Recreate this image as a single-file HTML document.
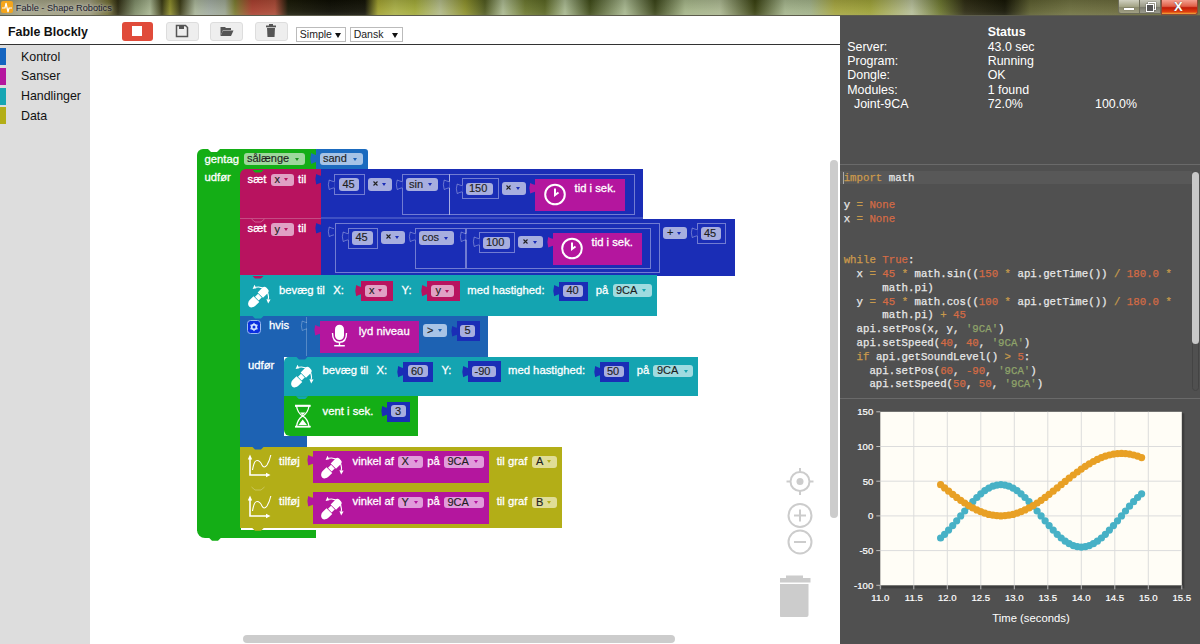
<!DOCTYPE html><html><head><meta charset="utf-8"><style>
html,body{margin:0;padding:0}
body{width:1200px;height:644px;overflow:hidden;position:relative;background:#fff;font-family:"Liberation Sans",sans-serif}
.a{position:absolute}
.tx{white-space:nowrap}
</style></head><body>
<div class="a" style="left:0;top:0;width:1200px;height:16px;background:linear-gradient(90deg,#8e8c6c 0px,#a4a488 20px,#9a9878 90px,#6e6a30 108px,#2e2c12 118px,#7e8c68 135px,#a6b490 150px,#3a3a14 162px,#8c8c2c 170px,#3a3a15 180px,#a8b498 195px,#a0aaa0 210px,#9aa490 225px,#7a7a30 235px,#a84030 252px,#a84a36 275px,#1a1a08 288px,#0e0e04 330px,#141408 365px,#a0a030 378px,#aab048 395px,#a0a838 415px,#b0b888 440px,#8c902c 465px,#505a20 485px,#aab890 503px,#6c7830 525px,#5a6624 545px,#a8b890 565px,#3e4a18 590px,#a8b890 625px,#3a4418 655px,#a4b488 685px,#aab690 720px,#384010 755px,#a4b48c 785px,#a0b088 810px,#a4a440 835px,#9ca038 870px,#b4bc98 912px,#6c7630 940px,#2e2c14 965px,#161606 1005px,#5c5e30 1030px,#6e7040 1070px,#6a6a3c 1118px,#6a6a3c 1200px)"></div>
<div class="a" style="left:0;top:0;width:1200px;height:16px;background:linear-gradient(rgba(0,0,0,0.12),rgba(255,255,255,0.05) 70%,rgba(255,255,255,0.12))"></div>
<div class="a" style="left:0;top:15px;width:1200px;height:1px;background:#5c5c4c"></div>
<div class="a" style="left:1px;top:1px;width:12px;height:12px;background:#f4a51c;border-radius:2px"></div>
<svg class="a" style="left:1px;top:1px" width="12" height="12"><path d="M1 7 H4 L5 2 L7 11 L8 7 H11" stroke="#fff" stroke-width="1.2" fill="none"/></svg>
<div class="a tx" style="left:15.8px;top:2.53px;font-size:9.2px;line-height:11.96px;color:#1a1a2a;font-weight:normal;font-family:'Liberation Sans',sans-serif;text-shadow:0 0 6px #bbb,0 0 3px #ccc">Fable - Shape Robotics</div>
<div class="a" style="left:1118px;top:0;width:22px;height:14px;background:linear-gradient(#d0d0c0,#a4a486 50%,#8a8a6c 52%,#a09f84);border:1px solid #6d6d5a;border-top:none;box-sizing:border-box;border-radius:0 0 0 3px"></div>
<div class="a" style="left:1124px;top:8px;width:10px;height:2px;background:#fff;box-shadow:0 0 1px #333"></div>
<div class="a" style="left:1140px;top:0;width:21px;height:14px;background:linear-gradient(#c6c6b9,#9a9a88 50%,#77776a 52%,#9a9a8c);border:1px solid #6d6d5a;border-top:none;border-left:none;box-sizing:border-box"></div>
<div class="a" style="left:1148px;top:2px;width:6px;height:6px;border:1.5px solid #fff;box-shadow:0 0 1px #333"></div>
<div class="a" style="left:1146px;top:4px;width:6px;height:6px;border:1.5px solid #fff;background:#555;box-shadow:0 0 1px #333"></div>
<div class="a" style="left:1161px;top:0;width:37px;height:15px;background:linear-gradient(#f4a090,#e06048 45%,#c01a08 55%,#e04010 85%,#f0b040);border:1px solid #8a4a3a;border-top:none;box-sizing:border-box;border-radius:0 0 3px 0"></div>
<div class="a tx" style="left:1174px;top:-1px;font-size:13px;font-weight:bold;color:#fff;text-shadow:0 0 1px #333">X</div>
<div class="a" style="left:0;top:16px;width:840px;height:28px;background:#fff"></div>
<div class="a" style="left:0;top:44px;width:840px;height:1px;background:#333"></div>
<div class="a tx" style="left:8px;top:23.64px;font-size:12.4px;line-height:16.12px;color:#111;font-weight:bold;font-family:'Liberation Sans',sans-serif;">Fable Blockly</div>
<div class="a" style="left:122px;top:22px;width:31px;height:19px;background:#e04b3a;border-radius:3px"></div>
<div class="a" style="left:132px;top:26px;width:10px;height:10px;background:#fff"></div>
<div class="a" style="left:166px;top:22px;width:33px;height:19px;background:#eee;border-radius:3px;border:1px solid #ddd;box-sizing:border-box"></div>
<div class="a" style="left:210px;top:22px;width:33px;height:19px;background:#eee;border-radius:3px;border:1px solid #ddd;box-sizing:border-box"></div>
<div class="a" style="left:255px;top:22px;width:33px;height:19px;background:#eee;border-radius:3px;border:1px solid #ddd;box-sizing:border-box"></div>
<svg class="a" style="left:175px;top:24px" width="14" height="14"><path d="M1.5 1.5 H10.5 L12.5 3.5 V12.5 H1.5 Z" fill="none" stroke="#555" stroke-width="1.5"/><rect x="4" y="2" width="5" height="3" fill="#555"/></svg>
<svg class="a" style="left:220px;top:25px" width="14" height="12"><path d="M0.5 2 H5 L6 3 H11 V5 H3 L0.5 11 Z" fill="#555"/><path d="M3 5.5 H13.5 L11 11 H0.5 Z" fill="#555"/></svg>
<svg class="a" style="left:265px;top:24px" width="12" height="14"><rect x="1" y="1.5" width="10" height="1.8" fill="#555"/><rect x="4" y="0" width="4" height="2" fill="#555"/><path d="M2 4 H10 L9.5 13 H2.5 Z" fill="#555"/></svg>
<div class="a" style="left:295.5px;top:27px;width:50.5px;height:15px;border:1px solid #bbb;box-sizing:border-box;background:#fff"></div>
<div class="a tx" style="left:299.8px;top:27.54px;font-size:10.5px;line-height:13.65px;color:#222;font-weight:normal;font-family:'Liberation Sans',sans-serif;">Simple</div>
<div class="a" style="left:335px;top:32.5px;width:0;height:0;border-left:3px solid transparent;border-right:3px solid transparent;border-top:5px solid #111"></div>
<div class="a" style="left:349.5px;top:27px;width:53.5px;height:15px;border:1px solid #bbb;box-sizing:border-box;background:#fff"></div>
<div class="a tx" style="left:353.7px;top:27.54px;font-size:10.5px;line-height:13.65px;color:#222;font-weight:normal;font-family:'Liberation Sans',sans-serif;">Dansk</div>
<div class="a" style="left:391.5px;top:32.5px;width:0;height:0;border-left:3px solid transparent;border-right:3px solid transparent;border-top:5px solid #111"></div>
<div class="a" style="left:0;top:45px;width:90px;height:599px;background:#dddddd"></div>
<div class="a" style="left:0;top:48px;width:6px;height:17px;background:#1565c0"></div>
<div class="a tx" style="left:21px;top:48.94px;font-size:12.4px;line-height:16.12px;color:#111;font-weight:normal;font-family:'Liberation Sans',sans-serif;">Kontrol</div>
<div class="a" style="left:0;top:67.5px;width:6px;height:17px;background:#b5169e"></div>
<div class="a tx" style="left:21px;top:68.44px;font-size:12.4px;line-height:16.12px;color:#111;font-weight:normal;font-family:'Liberation Sans',sans-serif;">Sanser</div>
<div class="a" style="left:0;top:87.5px;width:6px;height:17px;background:#17a6b3"></div>
<div class="a tx" style="left:21px;top:88.44px;font-size:12.4px;line-height:16.12px;color:#111;font-weight:normal;font-family:'Liberation Sans',sans-serif;">Handlinger</div>
<div class="a" style="left:0;top:107px;width:6px;height:17px;background:#b3ae17"></div>
<div class="a tx" style="left:21px;top:107.94px;font-size:12.4px;line-height:16.12px;color:#111;font-weight:normal;font-family:'Liberation Sans',sans-serif;">Data</div>
<div class="a" style="left:830px;top:160px;width:8px;height:358px;background:#ccc;border-radius:4px"></div>
<div class="a" style="left:243px;top:635px;width:432px;height:8px;background:#ccc;border-radius:4px"></div>
<svg class="a" style="left:780px;top:462px" width="42" height="170">
<g stroke="#ccc" stroke-width="2" fill="none">
<circle cx="20" cy="19.5" r="9.5"/>
<line x1="20" y1="6" x2="20" y2="10"/><line x1="20" y1="29" x2="20" y2="33"/>
<line x1="6.5" y1="19.5" x2="10.5" y2="19.5"/><line x1="29.5" y1="19.5" x2="33.5" y2="19.5"/>
<circle cx="20" cy="53.5" r="11.5"/>
<line x1="14" y1="53.5" x2="26" y2="53.5"/><line x1="20" y1="47.5" x2="20" y2="59.5"/>
<circle cx="20" cy="80" r="11.5"/>
<line x1="14" y1="80" x2="26" y2="80"/>
</g>
<circle cx="20" cy="19.5" r="3.5" fill="#ccc"/>
<path d="M-2.5 116 H30.5 V120.5 H-2.5 Z M6 113.5 H23 V116 H6 Z" fill="#ccc"/>
<path d="M-0.5 122 H28.5 V153 Q28.5 155 26.5 155 H1.5 Q-0.5 155 -0.5 153 Z" fill="#ccc"/>
</svg>
<div class="a" style="left:197px;top:149px;width:119px;height:21px;background:#14ae16;border-radius:6px 0 0 0"></div>
<div class="a" style="left:197px;top:169px;width:44px;height:362px;background:#14ae16;"></div>
<div class="a" style="left:197px;top:530px;width:119px;height:8px;background:#14ae16;border-radius:0 0 0 8px"></div>
<div class="a" style="left:208px;top:149px;width:12px;height:3px;background:#fff;clip-path:polygon(0 0,100% 0,75% 100%,25% 100%)"></div>
<div class="a tx" style="left:204.5px;top:151.74px;font-size:11.3px;line-height:14.69px;color:#fff;font-weight:normal;font-family:'Liberation Sans',sans-serif;-webkit-text-stroke:0.3px #fff">gentag</div>
<div class="a" style="left:243.5px;top:153px;width:61.5px;height:12px;background:#9ed89c;border-radius:3px"></div>
<div class="a tx" style="left:247px;top:151.44px;font-size:11px;line-height:14.3px;color:#1e1e1e;font-weight:normal;font-family:'Liberation Sans',sans-serif;-webkit-text-stroke:0.15px #1e1e1e">sålænge</div>
<div class="a" style="left:295.40px;top:157.60px;width:0;height:0;border-left:2.2px solid transparent;border-right:2.2px solid transparent;border-top:3px solid #1c8f1c"></div>
<div class="a tx" style="left:204.5px;top:170.24px;font-size:11.3px;line-height:14.69px;color:#fff;font-weight:normal;font-family:'Liberation Sans',sans-serif;-webkit-text-stroke:0.3px #fff">udfør</div>
<div class="a" style="left:316px;top:149px;width:52px;height:20px;background:#1b6bbf;border-radius:0 3px 0 0"></div>
<div class="a" style="left:320px;top:153px;width:43px;height:12px;background:#a6c3e6;border-radius:3px"></div>
<div class="a tx" style="left:323px;top:151.44px;font-size:11px;line-height:14.3px;color:#1e1e1e;font-weight:normal;font-family:'Liberation Sans',sans-serif;-webkit-text-stroke:0.15px #1e1e1e">sand</div>
<div class="a" style="left:353.40px;top:157.60px;width:0;height:0;border-left:2.2px solid transparent;border-right:2.2px solid transparent;border-top:3px solid #1b5fb5"></div>
<svg class="a" style="left:308.3px;top:152px" width="10" height="14"><g transform="translate(8 1)"><path d="M0.6 1.95 L0 1.95 Q-2 1.46 -4.8 0 Q-6.5 5.50 -4.8 11.00 Q-2 9.54 0 9.05 L0.6 9.05 Z" fill="#1b6bbf"/></g></svg>
<div class="a" style="left:239px;top:168px;width:13px;height:12px;background:#14ae16;"></div>
<div class="a" style="left:240px;top:169.3px;width:81.5px;height:49.19999999999999px;background:#b8135f;border-radius:6px 0 0 0"></div>
<div class="a" style="left:252px;top:169.5px;width:12px;height:3px;background:#14ae16;clip-path:polygon(0 0,100% 0,75% 100%,25% 100%)"></div>
<div class="a tx" style="left:247.5px;top:171.74px;font-size:11.3px;line-height:14.69px;color:#fff;font-weight:normal;font-family:'Liberation Sans',sans-serif;-webkit-text-stroke:0.3px #fff">sæt</div>
<div class="a" style="left:270.5px;top:173.5px;width:23.5px;height:12.5px;background:#e0a0c4;border-radius:3px"></div>
<div class="a tx" style="left:274.5px;top:172.19px;font-size:11px;line-height:14.3px;color:#1e1e1e;font-weight:normal;font-family:'Liberation Sans',sans-serif;-webkit-text-stroke:0.15px #1e1e1e">x</div>
<div class="a" style="left:284.40px;top:178.35px;width:0;height:0;border-left:2.2px solid transparent;border-right:2.2px solid transparent;border-top:3px solid #b8135f"></div>
<div class="a tx" style="left:298px;top:171.74px;font-size:11.3px;line-height:14.69px;color:#fff;font-weight:normal;font-family:'Liberation Sans',sans-serif;-webkit-text-stroke:0.3px #fff">til</div>
<div class="a" style="left:321px;top:169.3px;width:321.5px;height:47.69999999999999px;background:#1a2db6;"></div>
<svg class="a" style="left:313.2px;top:173px" width="10" height="13.5"><g transform="translate(8 1)"><path d="M0.6 1.86 L0 1.86 Q-2 1.39 -4.8 0 Q-6.5 5.25 -4.8 10.50 Q-2 9.11 0 8.64 L0.6 8.64 Z" fill="#1a2db6"/></g></svg>
<div class="a" style="left:334px;top:174px;width:28.50px;height:19.00px;border:1px solid rgba(255,255,255,0.38);box-sizing:content-box;"></div>
<div class="a" style="left:338.8px;top:178px;width:20.19999999999999px;height:12.5px;background:#a7aedf;border-radius:3px"></div>
<div class="a tx" style="left:342.5px;top:176.69px;font-size:11px;line-height:14.3px;color:#1e1e1e;font-weight:normal;font-family:'Liberation Sans',sans-serif;-webkit-text-stroke:0.15px #1e1e1e">45</div>
<div class="a" style="left:368px;top:178px;width:24px;height:12.5px;background:#a7aedf;border-radius:3px"></div>
<div class="a tx" style="left:372.0px;top:176.69px;font-size:11px;line-height:14.3px;color:#1e1e1e;font-weight:normal;font-family:'Liberation Sans',sans-serif;-webkit-text-stroke:0.15px #1e1e1e"></div>
<div class="a" style="left:382.40px;top:182.85px;width:0;height:0;border-left:2.2px solid transparent;border-right:2.2px solid transparent;border-top:3px solid #1a2db6"></div>
<svg class="a" style="left:372.50px;top:181.35px" width="5" height="5"><path d="M0.5 0.5 L4.5 4.5 M4.5 0.5 L0.5 4.5" stroke="#222" stroke-width="1.1"/></svg>
<div class="a" style="left:401.5px;top:174.2px;width:46.50px;height:38.80px;border:1px solid rgba(255,255,255,0.38);box-sizing:content-box;"></div>
<div class="a" style="left:405.6px;top:178px;width:32.19999999999999px;height:12.5px;background:#a7aedf;border-radius:3px"></div>
<div class="a tx" style="left:409px;top:176.69px;font-size:11px;line-height:14.3px;color:#1e1e1e;font-weight:normal;font-family:'Liberation Sans',sans-serif;-webkit-text-stroke:0.15px #1e1e1e">sin</div>
<div class="a" style="left:428.20px;top:182.85px;width:0;height:0;border-left:2.2px solid transparent;border-right:2.2px solid transparent;border-top:3px solid #1a2db6"></div>
<div class="a" style="left:449px;top:174.2px;width:183.70px;height:38.80px;border:1px solid rgba(255,255,255,0.38);box-sizing:content-box;"></div>
<div class="a" style="left:462px;top:178.3px;width:34.70px;height:19.20px;border:1px solid rgba(255,255,255,0.38);box-sizing:content-box;"></div>
<div class="a" style="left:466px;top:182.7px;width:27px;height:12.100000000000023px;background:#a7aedf;border-radius:3px"></div>
<div class="a tx" style="left:469px;top:181.19px;font-size:11px;line-height:14.3px;color:#1e1e1e;font-weight:normal;font-family:'Liberation Sans',sans-serif;-webkit-text-stroke:0.15px #1e1e1e">150</div>
<div class="a" style="left:501.9px;top:182px;width:24.100000000000023px;height:12.5px;background:#a7aedf;border-radius:3px"></div>
<div class="a tx" style="left:506.0px;top:180.69px;font-size:11px;line-height:14.3px;color:#1e1e1e;font-weight:normal;font-family:'Liberation Sans',sans-serif;-webkit-text-stroke:0.15px #1e1e1e"></div>
<div class="a" style="left:516.40px;top:186.85px;width:0;height:0;border-left:2.2px solid transparent;border-right:2.2px solid transparent;border-top:3px solid #1a2db6"></div>
<svg class="a" style="left:506.40px;top:185.35px" width="5" height="5"><path d="M0.5 0.5 L4.5 4.5 M4.5 0.5 L0.5 4.5" stroke="#222" stroke-width="1.1"/></svg>
<div class="a" style="left:535.4px;top:178.6px;width:90.0px;height:32.099999999999994px;background:#b4169e;"></div>
<svg class="a" style="left:527.4px;top:182px" width="10" height="13.5"><g transform="translate(8 1)"><path d="M0.6 1.86 L0 1.86 Q-2 1.39 -4.8 0 Q-6.5 5.25 -4.8 10.50 Q-2 9.11 0 8.64 L0.6 8.64 Z" fill="#b4169e"/></g></svg>
<svg class="a" style="left:543px;top:183px" width="24" height="24"><circle cx="12" cy="11.5" r="9.8" stroke="#fff" stroke-width="2" fill="none"/><path d="M12 5.5 V12 L15.5 9.5" stroke="#fff" stroke-width="2" fill="none"/></svg>
<div class="a tx" style="left:574.5px;top:181.34px;font-size:11.3px;line-height:14.69px;color:#fff;font-weight:normal;font-family:'Liberation Sans',sans-serif;-webkit-text-stroke:0.3px #fff">tid i sek.</div>
<div class="a" style="left:240px;top:218.3px;width:81px;height:1.1999999999999886px;background:#c44c84;"></div>
<div class="a" style="left:321px;top:217.2px;width:321.5px;height:2.3000000000000114px;background:#3f50c3;"></div>
<div class="a" style="left:240px;top:219px;width:81.5px;height:56.60000000000002px;background:#b8135f;"></div>
<svg class="a" style="left:251px;top:218px" width="14" height="5"><path d="M0.5 1 L4 4 H10 L13.5 1" stroke="#cf5c90" stroke-width="1" fill="none"/></svg>
<div class="a tx" style="left:247.5px;top:221.24px;font-size:11.3px;line-height:14.69px;color:#fff;font-weight:normal;font-family:'Liberation Sans',sans-serif;-webkit-text-stroke:0.3px #fff">sæt</div>
<div class="a" style="left:270.5px;top:223px;width:23.5px;height:12.5px;background:#e0a0c4;border-radius:3px"></div>
<div class="a tx" style="left:274.5px;top:221.69px;font-size:11px;line-height:14.3px;color:#1e1e1e;font-weight:normal;font-family:'Liberation Sans',sans-serif;-webkit-text-stroke:0.15px #1e1e1e">y</div>
<div class="a" style="left:284.40px;top:227.85px;width:0;height:0;border-left:2.2px solid transparent;border-right:2.2px solid transparent;border-top:3px solid #b8135f"></div>
<div class="a tx" style="left:298px;top:221.24px;font-size:11.3px;line-height:14.69px;color:#fff;font-weight:normal;font-family:'Liberation Sans',sans-serif;-webkit-text-stroke:0.3px #fff">til</div>
<div class="a" style="left:321px;top:218.7px;width:413.5px;height:56.900000000000034px;background:#1a2db6;"></div>
<svg class="a" style="left:313.2px;top:222px" width="10" height="13.5"><g transform="translate(8 1)"><path d="M0.6 1.86 L0 1.86 Q-2 1.39 -4.8 0 Q-6.5 5.25 -4.8 10.50 Q-2 9.11 0 8.64 L0.6 8.64 Z" fill="#1a2db6"/></g></svg>
<div class="a" style="left:334.5px;top:223px;width:323.00px;height:48.00px;border:1px solid rgba(255,255,255,0.38);box-sizing:content-box;"></div>
<div class="a" style="left:348px;top:227.5px;width:27.50px;height:19.50px;border:1px solid rgba(255,255,255,0.38);box-sizing:content-box;"></div>
<div class="a" style="left:352px;top:231px;width:20.5px;height:14px;background:#a7aedf;border-radius:3px"></div>
<div class="a tx" style="left:355.5px;top:230.44px;font-size:11px;line-height:14.3px;color:#1e1e1e;font-weight:normal;font-family:'Liberation Sans',sans-serif;-webkit-text-stroke:0.15px #1e1e1e">45</div>
<div class="a" style="left:381.25px;top:231px;width:23.75px;height:12.5px;background:#a7aedf;border-radius:3px"></div>
<div class="a tx" style="left:385.0px;top:229.69px;font-size:11px;line-height:14.3px;color:#1e1e1e;font-weight:normal;font-family:'Liberation Sans',sans-serif;-webkit-text-stroke:0.15px #1e1e1e"></div>
<div class="a" style="left:395.40px;top:235.85px;width:0;height:0;border-left:2.2px solid transparent;border-right:2.2px solid transparent;border-top:3px solid #1a2db6"></div>
<svg class="a" style="left:385.75px;top:234.35px" width="5" height="5"><path d="M0.5 0.5 L4.5 4.5 M4.5 0.5 L0.5 4.5" stroke="#222" stroke-width="1.1"/></svg>
<div class="a" style="left:415.3px;top:228px;width:49.20px;height:38.70px;border:1px solid rgba(255,255,255,0.38);box-sizing:content-box;"></div>
<div class="a" style="left:418.75px;top:231px;width:35.0px;height:14px;background:#a7aedf;border-radius:3px"></div>
<div class="a tx" style="left:422px;top:230.44px;font-size:11px;line-height:14.3px;color:#1e1e1e;font-weight:normal;font-family:'Liberation Sans',sans-serif;-webkit-text-stroke:0.15px #1e1e1e">cos</div>
<div class="a" style="left:444.15px;top:236.60px;width:0;height:0;border-left:2.2px solid transparent;border-right:2.2px solid transparent;border-top:3px solid #1a2db6"></div>
<div class="a" style="left:465.5px;top:228px;width:183.50px;height:38.70px;border:1px solid rgba(255,255,255,0.38);box-sizing:content-box;"></div>
<div class="a" style="left:478.75px;top:232px;width:34.25px;height:19.00px;border:1px solid rgba(255,255,255,0.38);box-sizing:content-box;"></div>
<div class="a" style="left:483px;top:237px;width:26.5px;height:12px;background:#a7aedf;border-radius:3px"></div>
<div class="a tx" style="left:486px;top:235.44px;font-size:11px;line-height:14.3px;color:#1e1e1e;font-weight:normal;font-family:'Liberation Sans',sans-serif;-webkit-text-stroke:0.15px #1e1e1e">100</div>
<div class="a" style="left:518px;top:236px;width:24.5px;height:12px;background:#a7aedf;border-radius:3px"></div>
<div class="a tx" style="left:522.0px;top:234.44px;font-size:11px;line-height:14.3px;color:#1e1e1e;font-weight:normal;font-family:'Liberation Sans',sans-serif;-webkit-text-stroke:0.15px #1e1e1e"></div>
<div class="a" style="left:532.90px;top:240.60px;width:0;height:0;border-left:2.2px solid transparent;border-right:2.2px solid transparent;border-top:3px solid #1a2db6"></div>
<svg class="a" style="left:522.50px;top:239.10px" width="5" height="5"><path d="M0.5 0.5 L4.5 4.5 M4.5 0.5 L0.5 4.5" stroke="#222" stroke-width="1.1"/></svg>
<div class="a" style="left:552.5px;top:232.5px;width:89.5px;height:32.0px;background:#b4169e;"></div>
<svg class="a" style="left:544.5px;top:236px" width="10" height="13.5"><g transform="translate(8 1)"><path d="M0.6 1.86 L0 1.86 Q-2 1.39 -4.8 0 Q-6.5 5.25 -4.8 10.50 Q-2 9.11 0 8.64 L0.6 8.64 Z" fill="#b4169e"/></g></svg>
<svg class="a" style="left:560px;top:237px" width="24" height="24"><circle cx="12" cy="11.5" r="9.8" stroke="#fff" stroke-width="2" fill="none"/><path d="M12 5.5 V12 L15.5 9.5" stroke="#fff" stroke-width="2" fill="none"/></svg>
<div class="a tx" style="left:591.5px;top:235.24px;font-size:11.3px;line-height:14.69px;color:#fff;font-weight:normal;font-family:'Liberation Sans',sans-serif;-webkit-text-stroke:0.3px #fff">tid i sek.</div>
<div class="a" style="left:663px;top:227px;width:24px;height:12px;background:#a7aedf;border-radius:3px"></div>
<div class="a tx" style="left:667px;top:225.44px;font-size:11px;line-height:14.3px;color:#1e1e1e;font-weight:normal;font-family:'Liberation Sans',sans-serif;-webkit-text-stroke:0.15px #1e1e1e">+</div>
<div class="a" style="left:677.40px;top:231.60px;width:0;height:0;border-left:2.2px solid transparent;border-right:2.2px solid transparent;border-top:3px solid #1a2db6"></div>
<div class="a" style="left:697px;top:223px;width:27.00px;height:19.00px;border:1px solid rgba(255,255,255,0.38);box-sizing:content-box;"></div>
<svg class="a" style="left:326px;top:178.5px" width="10" height="12.5"><g transform="translate(8 1)"><rect x="-0.5" y="1.68" width="1.2" height="6.14" fill="#1a2db6"/><path d="M0 1.68 Q-2 1.26 -4.8 0 Q-6.5 4.75 -4.8 9.50 Q-2 8.24 0 7.82" fill="none" stroke="rgba(255,255,255,0.38)" stroke-width="0.9"/></g></svg>
<svg class="a" style="left:393.7px;top:178.5px" width="10" height="12.5"><g transform="translate(8 1)"><rect x="-0.5" y="1.68" width="1.2" height="6.14" fill="#1a2db6"/><path d="M0 1.68 Q-2 1.26 -4.8 0 Q-6.5 4.75 -4.8 9.50 Q-2 8.24 0 7.82" fill="none" stroke="rgba(255,255,255,0.38)" stroke-width="0.9"/></g></svg>
<svg class="a" style="left:441.3px;top:178.5px" width="10" height="12.5"><g transform="translate(8 1)"><rect x="-0.5" y="1.68" width="1.2" height="6.14" fill="#1a2db6"/><path d="M0 1.68 Q-2 1.26 -4.8 0 Q-6.5 4.75 -4.8 9.50 Q-2 8.24 0 7.82" fill="none" stroke="rgba(255,255,255,0.38)" stroke-width="0.9"/></g></svg>
<svg class="a" style="left:454px;top:182.5px" width="10" height="12.5"><g transform="translate(8 1)"><rect x="-0.5" y="1.68" width="1.2" height="6.14" fill="#1a2db6"/><path d="M0 1.68 Q-2 1.26 -4.8 0 Q-6.5 4.75 -4.8 9.50 Q-2 8.24 0 7.82" fill="none" stroke="rgba(255,255,255,0.38)" stroke-width="0.9"/></g></svg>
<svg class="a" style="left:326.3px;top:226.3px" width="10" height="12.5"><g transform="translate(8 1)"><rect x="-0.5" y="1.68" width="1.2" height="6.14" fill="#1a2db6"/><path d="M0 1.68 Q-2 1.26 -4.8 0 Q-6.5 4.75 -4.8 9.50 Q-2 8.24 0 7.82" fill="none" stroke="rgba(255,255,255,0.38)" stroke-width="0.9"/></g></svg>
<svg class="a" style="left:340px;top:231px" width="10" height="12.5"><g transform="translate(8 1)"><rect x="-0.5" y="1.68" width="1.2" height="6.14" fill="#1a2db6"/><path d="M0 1.68 Q-2 1.26 -4.8 0 Q-6.5 4.75 -4.8 9.50 Q-2 8.24 0 7.82" fill="none" stroke="rgba(255,255,255,0.38)" stroke-width="0.9"/></g></svg>
<svg class="a" style="left:407.3px;top:231px" width="10" height="12.5"><g transform="translate(8 1)"><rect x="-0.5" y="1.68" width="1.2" height="6.14" fill="#1a2db6"/><path d="M0 1.68 Q-2 1.26 -4.8 0 Q-6.5 4.75 -4.8 9.50 Q-2 8.24 0 7.82" fill="none" stroke="rgba(255,255,255,0.38)" stroke-width="0.9"/></g></svg>
<svg class="a" style="left:457.5px;top:231px" width="10" height="12.5"><g transform="translate(8 1)"><rect x="-0.5" y="1.68" width="1.2" height="6.14" fill="#1a2db6"/><path d="M0 1.68 Q-2 1.26 -4.8 0 Q-6.5 4.75 -4.8 9.50 Q-2 8.24 0 7.82" fill="none" stroke="rgba(255,255,255,0.38)" stroke-width="0.9"/></g></svg>
<svg class="a" style="left:470.75px;top:235.5px" width="10" height="12.5"><g transform="translate(8 1)"><rect x="-0.5" y="1.68" width="1.2" height="6.14" fill="#1a2db6"/><path d="M0 1.68 Q-2 1.26 -4.8 0 Q-6.5 4.75 -4.8 9.50 Q-2 8.24 0 7.82" fill="none" stroke="rgba(255,255,255,0.38)" stroke-width="0.9"/></g></svg>
<svg class="a" style="left:689px;top:226.5px" width="10" height="12.5"><g transform="translate(8 1)"><rect x="-0.5" y="1.68" width="1.2" height="6.14" fill="#1a2db6"/><path d="M0 1.68 Q-2 1.26 -4.8 0 Q-6.5 4.75 -4.8 9.50 Q-2 8.24 0 7.82" fill="none" stroke="rgba(255,255,255,0.38)" stroke-width="0.9"/></g></svg>
<div class="a" style="left:700.75px;top:227px;width:20.25px;height:12.5px;background:#a7aedf;border-radius:3px"></div>
<div class="a tx" style="left:704px;top:225.69px;font-size:11px;line-height:14.3px;color:#1e1e1e;font-weight:normal;font-family:'Liberation Sans',sans-serif;-webkit-text-stroke:0.15px #1e1e1e">45</div>
<div class="a" style="left:240.3px;top:275.3px;width:416.7px;height:40.69999999999999px;background:#14a4b1;"></div>
<div class="a" style="left:252px;top:275.5px;width:12px;height:3px;background:#b8135f;clip-path:polygon(0 0,100% 0,75% 100%,25% 100%)"></div>
<svg class="a" style="left:240.8px;top:279.5px" width="32.0" height="32.0" viewBox="0 0 32 32"><g transform="rotate(-45 17.25 17.25)" fill="#fff"><path d="M14.65 13.2 H9.5 A5.2 4.05 0 0 0 9.5 21.3 H14.65 Z"/><rect x="15.25" y="14.65" width="4.35" height="5.2"/><path d="M20.2 13.45 H26.75 Q29.75 13.45 29.75 16.45 V18.05 Q29.75 21.05 26.75 21.05 H20.2 Z"/></g><path d="M14.96 7.31 A10.2 10.2 0 0 1 27.23 19.37" stroke="#fff" stroke-width="1.1" fill="none"/><path d="M13.5 4.8 L11.6 8.9 L15.4 8.3 Z M25.4 19.3 L29.6 19.6 L27.2 23.4 Z" fill="#fff"/></svg>
<div class="a tx" style="left:279px;top:282.74px;font-size:11.3px;line-height:14.69px;color:#fff;font-weight:normal;font-family:'Liberation Sans',sans-serif;-webkit-text-stroke:0.3px #fff">bevæg til</div>
<div class="a tx" style="left:333.3px;top:282.74px;font-size:11.3px;line-height:14.69px;color:#fff;font-weight:normal;font-family:'Liberation Sans',sans-serif;-webkit-text-stroke:0.3px #fff">X:</div>
<svg class="a" style="left:352.8px;top:284px" width="10" height="14.3"><g transform="translate(8 1)"><path d="M0.6 2.00 L0 2.00 Q-2 1.50 -4.8 0 Q-6.5 5.65 -4.8 11.30 Q-2 9.80 0 9.30 L0.6 9.30 Z" fill="#b8135f"/></g></svg>
<div class="a" style="left:360.8px;top:281.3px;width:32.19999999999999px;height:19.69999999999999px;background:#b8135f;"></div>
<div class="a" style="left:364.7px;top:285px;width:22.80000000000001px;height:11.699999999999989px;background:#e0a0c4;border-radius:3px"></div>
<div class="a tx" style="left:369px;top:283.29px;font-size:11px;line-height:14.3px;color:#1e1e1e;font-weight:normal;font-family:'Liberation Sans',sans-serif;-webkit-text-stroke:0.15px #1e1e1e">x</div>
<div class="a" style="left:377.90px;top:289.45px;width:0;height:0;border-left:2.2px solid transparent;border-right:2.2px solid transparent;border-top:3px solid #b8135f"></div>
<div class="a tx" style="left:401.5px;top:282.74px;font-size:11.3px;line-height:14.69px;color:#fff;font-weight:normal;font-family:'Liberation Sans',sans-serif;-webkit-text-stroke:0.3px #fff">Y:</div>
<svg class="a" style="left:419px;top:284px" width="10" height="14.3"><g transform="translate(8 1)"><path d="M0.6 2.00 L0 2.00 Q-2 1.50 -4.8 0 Q-6.5 5.65 -4.8 11.30 Q-2 9.80 0 9.30 L0.6 9.30 Z" fill="#b8135f"/></g></svg>
<div class="a" style="left:427px;top:281.3px;width:32.5px;height:19.899999999999977px;background:#b8135f;"></div>
<div class="a" style="left:431.2px;top:285px;width:23.30000000000001px;height:12px;background:#e0a0c4;border-radius:3px"></div>
<div class="a tx" style="left:435.5px;top:283.44px;font-size:11px;line-height:14.3px;color:#1e1e1e;font-weight:normal;font-family:'Liberation Sans',sans-serif;-webkit-text-stroke:0.15px #1e1e1e">y</div>
<div class="a" style="left:444.90px;top:289.60px;width:0;height:0;border-left:2.2px solid transparent;border-right:2.2px solid transparent;border-top:3px solid #b8135f"></div>
<div class="a tx" style="left:467.3px;top:282.74px;font-size:11.3px;line-height:14.69px;color:#fff;font-weight:normal;font-family:'Liberation Sans',sans-serif;-webkit-text-stroke:0.3px #fff">med hastighed:</div>
<svg class="a" style="left:551.1px;top:284.4px" width="10" height="14.3"><g transform="translate(8 1)"><path d="M0.6 2.00 L0 2.00 Q-2 1.50 -4.8 0 Q-6.5 5.65 -4.8 11.30 Q-2 9.80 0 9.30 L0.6 9.30 Z" fill="#1a2db6"/></g></svg>
<div class="a" style="left:559px;top:281.5px;width:29px;height:19.80000000000001px;background:#1a2db6;"></div>
<div class="a" style="left:563px;top:285px;width:20.299999999999955px;height:12px;background:#a7aedf;border-radius:3px"></div>
<div class="a tx" style="left:566.5px;top:283.44px;font-size:11px;line-height:14.3px;color:#1e1e1e;font-weight:normal;font-family:'Liberation Sans',sans-serif;-webkit-text-stroke:0.15px #1e1e1e">40</div>
<div class="a tx" style="left:595.8px;top:282.74px;font-size:11.3px;line-height:14.69px;color:#fff;font-weight:normal;font-family:'Liberation Sans',sans-serif;-webkit-text-stroke:0.3px #fff">på</div>
<div class="a" style="left:612.5px;top:284.2px;width:39.5px;height:12.5px;background:#9fdbe0;border-radius:3px"></div>
<div class="a tx" style="left:616px;top:282.89px;font-size:11px;line-height:14.3px;color:#1e1e1e;font-weight:normal;font-family:'Liberation Sans',sans-serif;-webkit-text-stroke:0.15px #1e1e1e">9CA</div>
<div class="a" style="left:642.40px;top:289.05px;width:0;height:0;border-left:2.2px solid transparent;border-right:2.2px solid transparent;border-top:3px solid #17a4b0"></div>
<div class="a" style="left:240.3px;top:315.9px;width:247.7px;height:41.10000000000002px;background:#1d62b3;"></div>
<div class="a" style="left:240.3px;top:356px;width:43.69999999999999px;height:81px;background:#1d62b3;"></div>
<div class="a" style="left:240.3px;top:436px;width:66.30000000000001px;height:10.800000000000011px;background:#1d62b3;"></div>
<div class="a" style="left:252px;top:315.6px;width:12px;height:3px;background:#14a4b1;clip-path:polygon(0 0,100% 0,75% 100%,25% 100%)"></div>
<div class="a" style="left:306.3px;top:317px;width:1px;height:39px;background:rgba(255,255,255,0.25)"></div>
<svg class="a" style="left:247px;top:320px" width="14" height="14"><rect x="0.5" y="0.5" width="13" height="13" rx="3" fill="#0b2fe0" stroke="#9dbcf0" stroke-width="1"/><g fill="#cfe0ff"><circle cx="7" cy="7" r="3.2"/><path d="M7 2.4 L8.2 4.4 H5.8 Z M7 11.6 L8.2 9.6 H5.8 Z M3 4.7 L5.3 4.7 L4.1 6.8 Z M11 4.7 L8.7 4.7 L9.9 6.8 Z M3 9.3 L5.3 9.3 L4.1 7.2 Z M11 9.3 L8.7 9.3 L9.9 7.2 Z"/></g><circle cx="7" cy="7" r="1.5" fill="#0b2fe0"/></svg>
<div class="a tx" style="left:269px;top:318.44px;font-size:11.3px;line-height:14.69px;color:#fff;font-weight:normal;font-family:'Liberation Sans',sans-serif;-webkit-text-stroke:0.3px #fff">hvis</div>
<div class="a tx" style="left:248px;top:357.74px;font-size:11.3px;line-height:14.69px;color:#fff;font-weight:normal;font-family:'Liberation Sans',sans-serif;-webkit-text-stroke:0.3px #fff">udfør</div>
<svg class="a" style="left:298.6px;top:320px" width="10" height="12.5"><g transform="translate(8 1)"><rect x="-0.5" y="1.68" width="1.2" height="6.14" fill="#1d62b3"/><path d="M0 1.68 Q-2 1.26 -4.8 0 Q-6.5 4.75 -4.8 9.50 Q-2 8.24 0 7.82" fill="none" stroke="rgba(255,255,255,0.3)" stroke-width="0.9"/></g></svg>
<svg class="a" style="left:311.7px;top:324px" width="10" height="13.5"><g transform="translate(8 1)"><path d="M0.6 1.86 L0 1.86 Q-2 1.39 -4.8 0 Q-6.5 5.25 -4.8 10.50 Q-2 9.11 0 8.64 L0.6 8.64 Z" fill="#b4169e"/></g></svg>
<div class="a" style="left:319.7px;top:320.9px;width:99.60000000000002px;height:31.900000000000034px;background:#b4169e;"></div>
<svg class="a" style="left:325px;top:320px" width="30" height="32"><rect x="10" y="4.7" width="9" height="15.3" rx="4.5" fill="#fff"/><path d="M7.5 13 Q7.5 22.3 14.5 22.3 Q21.5 22.3 21.5 13" stroke="#fff" stroke-width="1.4" fill="none"/><path d="M14.5 22 V25.5 M9.2 25.8 H19.8" stroke="#fff" stroke-width="1.4" fill="none"/></svg>
<div class="a tx" style="left:358.8px;top:323.74px;font-size:11.3px;line-height:14.69px;color:#fff;font-weight:normal;font-family:'Liberation Sans',sans-serif;-webkit-text-stroke:0.3px #fff">lyd niveau</div>
<div class="a" style="left:423px;top:324px;width:24.30000000000001px;height:12.5px;background:#a8c4e6;border-radius:3px"></div>
<div class="a tx" style="left:427px;top:322.69px;font-size:11px;line-height:14.3px;color:#1e1e1e;font-weight:normal;font-family:'Liberation Sans',sans-serif;-webkit-text-stroke:0.15px #1e1e1e">&gt;</div>
<div class="a" style="left:437.70px;top:328.85px;width:0;height:0;border-left:2.2px solid transparent;border-right:2.2px solid transparent;border-top:3px solid #1d62b3"></div>
<svg class="a" style="left:448.7px;top:324.5px" width="10" height="13.5"><g transform="translate(8 1)"><path d="M0.6 1.86 L0 1.86 Q-2 1.39 -4.8 0 Q-6.5 5.25 -4.8 10.50 Q-2 9.11 0 8.64 L0.6 8.64 Z" fill="#1a2db6"/></g></svg>
<div class="a" style="left:456.7px;top:321.3px;width:23.30000000000001px;height:20.19999999999999px;background:#1a2db6;"></div>
<div class="a" style="left:460px;top:324.8px;width:15px;height:12.399999999999977px;background:#a7aedf;border-radius:3px"></div>
<div class="a tx" style="left:464.5px;top:323.44px;font-size:11px;line-height:14.3px;color:#1e1e1e;font-weight:normal;font-family:'Liberation Sans',sans-serif;-webkit-text-stroke:0.15px #1e1e1e">5</div>
<div class="a" style="left:283.8px;top:356.7px;width:414.2px;height:39.80000000000001px;background:#14a4b1;border-radius:5px 0 0 0"></div>
<div class="a" style="left:296px;top:356.5px;width:12px;height:3px;background:#1d62b3;clip-path:polygon(0 0,100% 0,75% 100%,25% 100%)"></div>
<svg class="a" style="left:284px;top:360px" width="32.0" height="32.0" viewBox="0 0 32 32"><g transform="rotate(-45 17.25 17.25)" fill="#fff"><path d="M14.65 13.2 H9.5 A5.2 4.05 0 0 0 9.5 21.3 H14.65 Z"/><rect x="15.25" y="14.65" width="4.35" height="5.2"/><path d="M20.2 13.45 H26.75 Q29.75 13.45 29.75 16.45 V18.05 Q29.75 21.05 26.75 21.05 H20.2 Z"/></g><path d="M14.96 7.31 A10.2 10.2 0 0 1 27.23 19.37" stroke="#fff" stroke-width="1.1" fill="none"/><path d="M13.5 4.8 L11.6 8.9 L15.4 8.3 Z M25.4 19.3 L29.6 19.6 L27.2 23.4 Z" fill="#fff"/></svg>
<div class="a tx" style="left:322.5px;top:363.24px;font-size:11.3px;line-height:14.69px;color:#fff;font-weight:normal;font-family:'Liberation Sans',sans-serif;-webkit-text-stroke:0.3px #fff">bevæg til</div>
<div class="a tx" style="left:376.5px;top:363.24px;font-size:11.3px;line-height:14.69px;color:#fff;font-weight:normal;font-family:'Liberation Sans',sans-serif;-webkit-text-stroke:0.3px #fff">X:</div>
<svg class="a" style="left:395.4px;top:364.5px" width="10" height="14.3"><g transform="translate(8 1)"><path d="M0.6 2.00 L0 2.00 Q-2 1.50 -4.8 0 Q-6.5 5.65 -4.8 11.30 Q-2 9.80 0 9.30 L0.6 9.30 Z" fill="#1a2db6"/></g></svg>
<div class="a" style="left:403.4px;top:361.7px;width:29.30000000000001px;height:20.0px;background:#1a2db6;"></div>
<div class="a" style="left:407.7px;top:365.4px;width:20.69999999999999px;height:11.600000000000023px;background:#a7aedf;border-radius:3px"></div>
<div class="a tx" style="left:411px;top:363.64px;font-size:11px;line-height:14.3px;color:#1e1e1e;font-weight:normal;font-family:'Liberation Sans',sans-serif;-webkit-text-stroke:0.15px #1e1e1e">60</div>
<div class="a tx" style="left:441.4px;top:363.24px;font-size:11.3px;line-height:14.69px;color:#fff;font-weight:normal;font-family:'Liberation Sans',sans-serif;-webkit-text-stroke:0.3px #fff">Y:</div>
<svg class="a" style="left:459.5px;top:364.5px" width="10" height="14.3"><g transform="translate(8 1)"><path d="M0.6 2.00 L0 2.00 Q-2 1.50 -4.8 0 Q-6.5 5.65 -4.8 11.30 Q-2 9.80 0 9.30 L0.6 9.30 Z" fill="#1a2db6"/></g></svg>
<div class="a" style="left:467.5px;top:361.3px;width:33.10000000000002px;height:20.69999999999999px;background:#1a2db6;"></div>
<div class="a" style="left:471.5px;top:365.5px;width:24.30000000000001px;height:11.800000000000011px;background:#a7aedf;border-radius:3px"></div>
<div class="a tx" style="left:474.5px;top:363.84px;font-size:11px;line-height:14.3px;color:#1e1e1e;font-weight:normal;font-family:'Liberation Sans',sans-serif;-webkit-text-stroke:0.15px #1e1e1e">-90</div>
<div class="a tx" style="left:508px;top:363.24px;font-size:11.3px;line-height:14.69px;color:#fff;font-weight:normal;font-family:'Liberation Sans',sans-serif;-webkit-text-stroke:0.3px #fff">med hastighed:</div>
<svg class="a" style="left:591.6px;top:364.5px" width="10" height="14.3"><g transform="translate(8 1)"><path d="M0.6 2.00 L0 2.00 Q-2 1.50 -4.8 0 Q-6.5 5.65 -4.8 11.30 Q-2 9.80 0 9.30 L0.6 9.30 Z" fill="#1a2db6"/></g></svg>
<div class="a" style="left:599.6px;top:361.5px;width:29.199999999999932px;height:20.5px;background:#1a2db6;"></div>
<div class="a" style="left:603.6px;top:365.5px;width:20.899999999999977px;height:11.800000000000011px;background:#a7aedf;border-radius:3px"></div>
<div class="a tx" style="left:607px;top:363.84px;font-size:11px;line-height:14.3px;color:#1e1e1e;font-weight:normal;font-family:'Liberation Sans',sans-serif;-webkit-text-stroke:0.15px #1e1e1e">50</div>
<div class="a tx" style="left:636.7px;top:363.24px;font-size:11.3px;line-height:14.69px;color:#fff;font-weight:normal;font-family:'Liberation Sans',sans-serif;-webkit-text-stroke:0.3px #fff">på</div>
<div class="a" style="left:653.3px;top:364.8px;width:40.0px;height:12.5px;background:#9fdbe0;border-radius:3px"></div>
<div class="a tx" style="left:657px;top:363.49px;font-size:11px;line-height:14.3px;color:#1e1e1e;font-weight:normal;font-family:'Liberation Sans',sans-serif;-webkit-text-stroke:0.15px #1e1e1e">9CA</div>
<div class="a" style="left:683.70px;top:369.65px;width:0;height:0;border-left:2.2px solid transparent;border-right:2.2px solid transparent;border-top:3px solid #17a4b0"></div>
<div class="a" style="left:283.8px;top:396.2px;width:134.39999999999998px;height:40.30000000000001px;background:#14ae16;border-radius:0 0 0 6px"></div>
<div class="a" style="left:296px;top:396.3px;width:12px;height:3px;background:#14a4b1;clip-path:polygon(0 0,100% 0,75% 100%,25% 100%)"></div>
<svg class="a" style="left:288px;top:400px" width="30" height="32"><g stroke="#fff" stroke-width="1.3" fill="none"><path d="M7 5.8 H22.5 M7 26.7 H22.5"/><path d="M8.5 6 Q9.5 13 14.7 16 Q20 13 21 6"/><path d="M8.5 26.5 Q9.5 19 14.7 16 Q20 19 21 26.5"/></g><path d="M7 4.8 H22.5 V6.8 H7 Z M7 25.8 H22.5 V27.6 H7 Z" fill="#fff"/><path d="M12 12.5 H17.5 L14.7 15 Z M10.5 25 L14.7 19.5 L19 25 Z" fill="#fff"/></svg>
<div class="a tx" style="left:322.5px;top:403.54px;font-size:11.3px;line-height:14.69px;color:#fff;font-weight:normal;font-family:'Liberation Sans',sans-serif;-webkit-text-stroke:0.3px #fff">vent i sek.</div>
<svg class="a" style="left:379px;top:404.5px" width="10" height="13.5"><g transform="translate(8 1)"><path d="M0.6 1.86 L0 1.86 Q-2 1.39 -4.8 0 Q-6.5 5.25 -4.8 10.50 Q-2 9.11 0 8.64 L0.6 8.64 Z" fill="#1a2db6"/></g></svg>
<div class="a" style="left:387px;top:401.7px;width:23px;height:20.30000000000001px;background:#1a2db6;"></div>
<div class="a" style="left:391px;top:405.2px;width:15px;height:12.300000000000011px;background:#a7aedf;border-radius:3px"></div>
<div class="a tx" style="left:395px;top:403.79px;font-size:11px;line-height:14.3px;color:#1e1e1e;font-weight:normal;font-family:'Liberation Sans',sans-serif;-webkit-text-stroke:0.15px #1e1e1e">3</div>
<div class="a" style="left:240.3px;top:446.8px;width:321.40000000000003px;height:40.5px;background:#b3ae17;"></div>
<svg class="a" style="left:244px;top:448.3px" width="32" height="32"><g stroke="#fff" stroke-width="1.6" fill="none"><path d="M6 9 V27 H24"/><path d="M8.5 22 Q10 12.5 13 12.5 Q16 12.5 18 17 Q20 21 23 17 Q25.5 13 26.8 7" stroke-width="1.1"/></g><path d="M3.8 11.5 L6 6.5 L8.2 11.5 Z M22 24.8 L26.5 27 L22 29.2 Z" fill="#fff"/></svg>
<div class="a tx" style="left:279px;top:453.54px;font-size:11.3px;line-height:14.69px;color:#fff;font-weight:normal;font-family:'Liberation Sans',sans-serif;-webkit-text-stroke:0.3px #fff">tilføj</div>
<svg class="a" style="left:305px;top:454.3px" width="10" height="13.5"><g transform="translate(8 1)"><path d="M0.6 1.86 L0 1.86 Q-2 1.39 -4.8 0 Q-6.5 5.25 -4.8 10.50 Q-2 9.11 0 8.64 L0.6 8.64 Z" fill="#b4169e"/></g></svg>
<div class="a" style="left:313px;top:451.40000000000003px;width:176px;height:31.69999999999999px;background:#b4169e;"></div>
<svg class="a" style="left:314px;top:451.1px" width="32.0" height="32.0" viewBox="0 0 32 32"><g transform="rotate(-45 17.25 17.25)" fill="#fff"><path d="M14.65 13.2 H9.5 A5.2 4.05 0 0 0 9.5 21.3 H14.65 Z"/><rect x="15.25" y="14.65" width="4.35" height="5.2"/><path d="M20.2 13.45 H26.75 Q29.75 13.45 29.75 16.45 V18.05 Q29.75 21.05 26.75 21.05 H20.2 Z"/></g><path d="M14.96 7.31 A10.2 10.2 0 0 1 27.23 19.37" stroke="#fff" stroke-width="1.1" fill="none"/><path d="M13.5 4.8 L11.6 8.9 L15.4 8.3 Z M25.4 19.3 L29.6 19.6 L27.2 23.4 Z" fill="#fff"/></svg>
<div class="a tx" style="left:352.5px;top:453.54px;font-size:11.3px;line-height:14.69px;color:#fff;font-weight:normal;font-family:'Liberation Sans',sans-serif;-webkit-text-stroke:0.3px #fff">vinkel af</div>
<div class="a" style="left:398.3px;top:456.0px;width:25.0px;height:11.699999999999989px;background:#e19cdb;border-radius:3px"></div>
<div class="a tx" style="left:401.5px;top:454.29px;font-size:11px;line-height:14.3px;color:#1e1e1e;font-weight:normal;font-family:'Liberation Sans',sans-serif;-webkit-text-stroke:0.15px #1e1e1e">X</div>
<div class="a" style="left:413.70px;top:460.45px;width:0;height:0;border-left:2.2px solid transparent;border-right:2.2px solid transparent;border-top:3px solid #b4169e"></div>
<div class="a tx" style="left:427.3px;top:453.54px;font-size:11.3px;line-height:14.69px;color:#fff;font-weight:normal;font-family:'Liberation Sans',sans-serif;-webkit-text-stroke:0.3px #fff">på</div>
<div class="a" style="left:444px;top:456.0px;width:40px;height:11.699999999999989px;background:#e19cdb;border-radius:3px"></div>
<div class="a tx" style="left:447.5px;top:454.29px;font-size:11px;line-height:14.3px;color:#1e1e1e;font-weight:normal;font-family:'Liberation Sans',sans-serif;-webkit-text-stroke:0.15px #1e1e1e">9CA</div>
<div class="a" style="left:474.40px;top:460.45px;width:0;height:0;border-left:2.2px solid transparent;border-right:2.2px solid transparent;border-top:3px solid #b4169e"></div>
<div class="a tx" style="left:496.7px;top:453.54px;font-size:11.3px;line-height:14.69px;color:#fff;font-weight:normal;font-family:'Liberation Sans',sans-serif;-webkit-text-stroke:0.3px #fff">til graf</div>
<div class="a" style="left:532.3px;top:456.0px;width:24.40000000000009px;height:11.699999999999989px;background:#e0dd97;border-radius:3px"></div>
<div class="a tx" style="left:536px;top:454.29px;font-size:11px;line-height:14.3px;color:#1e1e1e;font-weight:normal;font-family:'Liberation Sans',sans-serif;-webkit-text-stroke:0.15px #1e1e1e">A</div>
<div class="a" style="left:547.10px;top:460.45px;width:0;height:0;border-left:2.2px solid transparent;border-right:2.2px solid transparent;border-top:3px solid #b3ae17"></div>
<div class="a" style="left:240.3px;top:486.5px;width:321.40000000000003px;height:1.1999999999999886px;background:#c6c24a;"></div>
<div class="a" style="left:240.3px;top:487.3px;width:321.40000000000003px;height:40.49999999999994px;background:#b3ae17;"></div>
<svg class="a" style="left:244px;top:488.8px" width="32" height="32"><g stroke="#fff" stroke-width="1.6" fill="none"><path d="M6 9 V27 H24"/><path d="M8.5 22 Q10 12.5 13 12.5 Q16 12.5 18 17 Q20 21 23 17 Q25.5 13 26.8 7" stroke-width="1.1"/></g><path d="M3.8 11.5 L6 6.5 L8.2 11.5 Z M22 24.8 L26.5 27 L22 29.2 Z" fill="#fff"/></svg>
<div class="a tx" style="left:279px;top:494.04px;font-size:11.3px;line-height:14.69px;color:#fff;font-weight:normal;font-family:'Liberation Sans',sans-serif;-webkit-text-stroke:0.3px #fff">tilføj</div>
<svg class="a" style="left:305px;top:494.8px" width="10" height="13.5"><g transform="translate(8 1)"><path d="M0.6 1.86 L0 1.86 Q-2 1.39 -4.8 0 Q-6.5 5.25 -4.8 10.50 Q-2 9.11 0 8.64 L0.6 8.64 Z" fill="#b4169e"/></g></svg>
<div class="a" style="left:313px;top:491.90000000000003px;width:176px;height:31.69999999999999px;background:#b4169e;"></div>
<svg class="a" style="left:314px;top:491.6px" width="32.0" height="32.0" viewBox="0 0 32 32"><g transform="rotate(-45 17.25 17.25)" fill="#fff"><path d="M14.65 13.2 H9.5 A5.2 4.05 0 0 0 9.5 21.3 H14.65 Z"/><rect x="15.25" y="14.65" width="4.35" height="5.2"/><path d="M20.2 13.45 H26.75 Q29.75 13.45 29.75 16.45 V18.05 Q29.75 21.05 26.75 21.05 H20.2 Z"/></g><path d="M14.96 7.31 A10.2 10.2 0 0 1 27.23 19.37" stroke="#fff" stroke-width="1.1" fill="none"/><path d="M13.5 4.8 L11.6 8.9 L15.4 8.3 Z M25.4 19.3 L29.6 19.6 L27.2 23.4 Z" fill="#fff"/></svg>
<div class="a tx" style="left:352.5px;top:494.04px;font-size:11.3px;line-height:14.69px;color:#fff;font-weight:normal;font-family:'Liberation Sans',sans-serif;-webkit-text-stroke:0.3px #fff">vinkel af</div>
<div class="a" style="left:398.3px;top:496.5px;width:25.0px;height:11.699999999999989px;background:#e19cdb;border-radius:3px"></div>
<div class="a tx" style="left:401.5px;top:494.79px;font-size:11px;line-height:14.3px;color:#1e1e1e;font-weight:normal;font-family:'Liberation Sans',sans-serif;-webkit-text-stroke:0.15px #1e1e1e">Y</div>
<div class="a" style="left:413.70px;top:500.95px;width:0;height:0;border-left:2.2px solid transparent;border-right:2.2px solid transparent;border-top:3px solid #b4169e"></div>
<div class="a tx" style="left:427.3px;top:494.04px;font-size:11.3px;line-height:14.69px;color:#fff;font-weight:normal;font-family:'Liberation Sans',sans-serif;-webkit-text-stroke:0.3px #fff">på</div>
<div class="a" style="left:444px;top:496.5px;width:40px;height:11.699999999999989px;background:#e19cdb;border-radius:3px"></div>
<div class="a tx" style="left:447.5px;top:494.79px;font-size:11px;line-height:14.3px;color:#1e1e1e;font-weight:normal;font-family:'Liberation Sans',sans-serif;-webkit-text-stroke:0.15px #1e1e1e">9CA</div>
<div class="a" style="left:474.40px;top:500.95px;width:0;height:0;border-left:2.2px solid transparent;border-right:2.2px solid transparent;border-top:3px solid #b4169e"></div>
<div class="a tx" style="left:496.7px;top:494.04px;font-size:11.3px;line-height:14.69px;color:#fff;font-weight:normal;font-family:'Liberation Sans',sans-serif;-webkit-text-stroke:0.3px #fff">til graf</div>
<div class="a" style="left:532.3px;top:496.5px;width:24.40000000000009px;height:11.699999999999989px;background:#e0dd97;border-radius:3px"></div>
<div class="a tx" style="left:536px;top:494.79px;font-size:11px;line-height:14.3px;color:#1e1e1e;font-weight:normal;font-family:'Liberation Sans',sans-serif;-webkit-text-stroke:0.15px #1e1e1e">B</div>
<div class="a" style="left:547.10px;top:500.95px;width:0;height:0;border-left:2.2px solid transparent;border-right:2.2px solid transparent;border-top:3px solid #b3ae17"></div>
<div class="a" style="left:252px;top:446.5px;width:12px;height:3px;background:#1d62b3;clip-path:polygon(0 0,100% 0,75% 100%,25% 100%)"></div>
<svg class="a" style="left:251px;top:486px" width="14" height="5"><path d="M0.5 1 L4 4 H10 L13.5 1" stroke="#c9c55a" stroke-width="1" fill="none"/></svg>
<div class="a" style="left:252px;top:527.8px;width:12px;height:3px;background:#b3ae17;clip-path:polygon(0 0,100% 0,75% 100%,25% 100%)"></div>
<div class="a" style="left:209px;top:537.7px;width:12px;height:3px;background:#14ae16;clip-path:polygon(0 0,100% 0,75% 100%,25% 100%)"></div>
<div class="a" style="left:840px;top:16px;width:360px;height:628px;background:#505050"></div>
<div class="a tx" style="left:987.7px;top:23.64px;font-size:12.4px;line-height:16.12px;color:#fff;font-weight:bold;font-family:'Liberation Sans',sans-serif;">Status</div>
<div class="a tx" style="left:847.3px;top:38.64px;font-size:12.4px;line-height:16.12px;color:#fff;font-weight:normal;font-family:'Liberation Sans',sans-serif;">Server:</div>
<div class="a tx" style="left:987.7px;top:38.64px;font-size:12.4px;line-height:16.12px;color:#fff;font-weight:normal;font-family:'Liberation Sans',sans-serif;">43.0 sec</div>
<div class="a tx" style="left:847.3px;top:52.94px;font-size:12.4px;line-height:16.12px;color:#fff;font-weight:normal;font-family:'Liberation Sans',sans-serif;">Program:</div>
<div class="a tx" style="left:987.7px;top:52.94px;font-size:12.4px;line-height:16.12px;color:#fff;font-weight:normal;font-family:'Liberation Sans',sans-serif;">Running</div>
<div class="a tx" style="left:847.3px;top:67.44px;font-size:12.4px;line-height:16.12px;color:#fff;font-weight:normal;font-family:'Liberation Sans',sans-serif;">Dongle:</div>
<div class="a tx" style="left:987.7px;top:67.44px;font-size:12.4px;line-height:16.12px;color:#fff;font-weight:normal;font-family:'Liberation Sans',sans-serif;">OK</div>
<div class="a tx" style="left:847.3px;top:81.64px;font-size:12.4px;line-height:16.12px;color:#fff;font-weight:normal;font-family:'Liberation Sans',sans-serif;">Modules:</div>
<div class="a tx" style="left:987.7px;top:81.64px;font-size:12.4px;line-height:16.12px;color:#fff;font-weight:normal;font-family:'Liberation Sans',sans-serif;">1 found</div>
<div class="a tx" style="left:854px;top:96.14px;font-size:12.4px;line-height:16.12px;color:#fff;font-weight:normal;font-family:'Liberation Sans',sans-serif;">Joint-9CA</div>
<div class="a tx" style="left:987.7px;top:96.14px;font-size:12.4px;line-height:16.12px;color:#fff;font-weight:normal;font-family:'Liberation Sans',sans-serif;">72.0%</div>
<div class="a tx" style="left:1095px;top:96.14px;font-size:12.4px;line-height:16.12px;color:#fff;font-weight:normal;font-family:'Liberation Sans',sans-serif;">100.0%</div>
<div class="a" style="left:840px;top:164px;width:360px;height:1px;background:#6a6a6a"></div>
<div class="a" style="left:840px;top:171px;width:352px;height:13px;background:#585858"></div>
<div class="a" style="left:843px;top:172px;width:1px;height:12px;background:#aaa"></div>
<div class="a" style="left:840px;top:165px;width:352px;height:232px;overflow:hidden">
<div class="a tx" style="left:3.7px;top:6.67px;font-family:'Liberation Mono',monospace;font-size:10.72px;line-height:13.78px;color:#e8e8e8;white-space:pre;-webkit-text-stroke-width:0.25px"><span style="color:#cc9a4c">import</span> <span style="color:#e8e8e8">math</span></div>
<div class="a tx" style="left:3.7px;top:20.45px;font-family:'Liberation Mono',monospace;font-size:10.72px;line-height:13.78px;color:#e8e8e8;white-space:pre;-webkit-text-stroke-width:0.25px"></div>
<div class="a tx" style="left:3.7px;top:34.23px;font-family:'Liberation Mono',monospace;font-size:10.72px;line-height:13.78px;color:#e8e8e8;white-space:pre;-webkit-text-stroke-width:0.25px"><span style="color:#e8e8e8">y</span> <span style="color:#c69a4c">=</span> <span style="color:#d36b45">None</span></div>
<div class="a tx" style="left:3.7px;top:48.01px;font-family:'Liberation Mono',monospace;font-size:10.72px;line-height:13.78px;color:#e8e8e8;white-space:pre;-webkit-text-stroke-width:0.25px"><span style="color:#e8e8e8">x</span> <span style="color:#c69a4c">=</span> <span style="color:#d36b45">None</span></div>
<div class="a tx" style="left:3.7px;top:61.79px;font-family:'Liberation Mono',monospace;font-size:10.72px;line-height:13.78px;color:#e8e8e8;white-space:pre;-webkit-text-stroke-width:0.25px"></div>
<div class="a tx" style="left:3.7px;top:75.57px;font-family:'Liberation Mono',monospace;font-size:10.72px;line-height:13.78px;color:#e8e8e8;white-space:pre;-webkit-text-stroke-width:0.25px"></div>
<div class="a tx" style="left:3.7px;top:89.35px;font-family:'Liberation Mono',monospace;font-size:10.72px;line-height:13.78px;color:#e8e8e8;white-space:pre;-webkit-text-stroke-width:0.25px"><span style="color:#cc9a4c">while</span> <span style="color:#d36b45">True</span><span style="color:#e8e8e8">:</span></div>
<div class="a tx" style="left:3.7px;top:103.13px;font-family:'Liberation Mono',monospace;font-size:10.72px;line-height:13.78px;color:#e8e8e8;white-space:pre;-webkit-text-stroke-width:0.25px">  <span style="color:#e8e8e8">x</span> <span style="color:#c69a4c">=</span> <span style="color:#d36b45">45</span> <span style="color:#c69a4c">*</span> <span style="color:#e8e8e8">math.sin((</span><span style="color:#d36b45">150</span> <span style="color:#c69a4c">*</span> <span style="color:#e8e8e8">api.getTime())</span> <span style="color:#c69a4c">/</span> <span style="color:#d36b45">180.0</span> <span style="color:#c69a4c">*</span></div>
<div class="a tx" style="left:3.7px;top:116.91px;font-family:'Liberation Mono',monospace;font-size:10.72px;line-height:13.78px;color:#e8e8e8;white-space:pre;-webkit-text-stroke-width:0.25px">      <span style="color:#e8e8e8">math.pi)</span></div>
<div class="a tx" style="left:3.7px;top:130.69px;font-family:'Liberation Mono',monospace;font-size:10.72px;line-height:13.78px;color:#e8e8e8;white-space:pre;-webkit-text-stroke-width:0.25px">  <span style="color:#e8e8e8">y</span> <span style="color:#c69a4c">=</span> <span style="color:#d36b45">45</span> <span style="color:#c69a4c">*</span> <span style="color:#e8e8e8">math.cos((</span><span style="color:#d36b45">100</span> <span style="color:#c69a4c">*</span> <span style="color:#e8e8e8">api.getTime())</span> <span style="color:#c69a4c">/</span> <span style="color:#d36b45">180.0</span> <span style="color:#c69a4c">*</span></div>
<div class="a tx" style="left:3.7px;top:144.47px;font-family:'Liberation Mono',monospace;font-size:10.72px;line-height:13.78px;color:#e8e8e8;white-space:pre;-webkit-text-stroke-width:0.25px">      <span style="color:#e8e8e8">math.pi)</span> <span style="color:#c69a4c">+</span> <span style="color:#d36b45">45</span></div>
<div class="a tx" style="left:3.7px;top:158.25px;font-family:'Liberation Mono',monospace;font-size:10.72px;line-height:13.78px;color:#e8e8e8;white-space:pre;-webkit-text-stroke-width:0.25px">  <span style="color:#e8e8e8">api.setPos(x, y, </span><span style="color:#8fa36a">'9CA'</span><span style="color:#e8e8e8">)</span></div>
<div class="a tx" style="left:3.7px;top:172.03px;font-family:'Liberation Mono',monospace;font-size:10.72px;line-height:13.78px;color:#e8e8e8;white-space:pre;-webkit-text-stroke-width:0.25px">  <span style="color:#e8e8e8">api.setSpeed(</span><span style="color:#d36b45">40</span><span style="color:#e8e8e8">, </span><span style="color:#d36b45">40</span><span style="color:#e8e8e8">, </span><span style="color:#8fa36a">'9CA'</span><span style="color:#e8e8e8">)</span></div>
<div class="a tx" style="left:3.7px;top:185.81px;font-family:'Liberation Mono',monospace;font-size:10.72px;line-height:13.78px;color:#e8e8e8;white-space:pre;-webkit-text-stroke-width:0.25px">  <span style="color:#cc9a4c">if</span> <span style="color:#e8e8e8">api.getSoundLevel()</span> <span style="color:#c69a4c">&gt;</span> <span style="color:#d36b45">5</span><span style="color:#e8e8e8">:</span></div>
<div class="a tx" style="left:3.7px;top:199.59px;font-family:'Liberation Mono',monospace;font-size:10.72px;line-height:13.78px;color:#e8e8e8;white-space:pre;-webkit-text-stroke-width:0.25px">    <span style="color:#e8e8e8">api.setPos(</span><span style="color:#d36b45">60</span><span style="color:#e8e8e8">, </span><span style="color:#d36b45">-90</span><span style="color:#e8e8e8">, </span><span style="color:#8fa36a">'9CA'</span><span style="color:#e8e8e8">)</span></div>
<div class="a tx" style="left:3.7px;top:213.37px;font-family:'Liberation Mono',monospace;font-size:10.72px;line-height:13.78px;color:#e8e8e8;white-space:pre;-webkit-text-stroke-width:0.25px">    <span style="color:#e8e8e8">api.setSpeed(</span><span style="color:#d36b45">50</span><span style="color:#e8e8e8">, </span><span style="color:#d36b45">50</span><span style="color:#e8e8e8">, </span><span style="color:#8fa36a">'9CA'</span><span style="color:#e8e8e8">)</span></div>
</div>
<div class="a" style="left:1192px;top:171.5px;width:7px;height:219px;border-radius:3.5px;border:1px solid #444;box-sizing:border-box"></div>
<div class="a" style="left:1192px;top:171.5px;width:7px;height:172px;border-radius:3.5px;background:#c8c8c8"></div>
<div class="a" style="left:840px;top:397.5px;width:360px;height:1px;background:#6a6a6a"></div>
<svg class="a" style="left:0;top:0" width="1200" height="644"><rect x="881.8" y="413.29999999999995" width="302.5" height="175.0" fill="#3e3e3e"/><rect x="880.3" y="411.79999999999995" width="301.5" height="173.5" fill="#fffdf6"/><line x1="913.8" y1="411.79999999999995" x2="913.8" y2="585.3" stroke="#dcdcdc" stroke-width="1"/><line x1="947.3" y1="411.79999999999995" x2="947.3" y2="585.3" stroke="#dcdcdc" stroke-width="1"/><line x1="980.8" y1="411.79999999999995" x2="980.8" y2="585.3" stroke="#dcdcdc" stroke-width="1"/><line x1="1014.3" y1="411.79999999999995" x2="1014.3" y2="585.3" stroke="#dcdcdc" stroke-width="1"/><line x1="1047.8" y1="411.79999999999995" x2="1047.8" y2="585.3" stroke="#dcdcdc" stroke-width="1"/><line x1="1081.3" y1="411.79999999999995" x2="1081.3" y2="585.3" stroke="#dcdcdc" stroke-width="1"/><line x1="1114.8" y1="411.79999999999995" x2="1114.8" y2="585.3" stroke="#dcdcdc" stroke-width="1"/><line x1="1148.3" y1="411.79999999999995" x2="1148.3" y2="585.3" stroke="#dcdcdc" stroke-width="1"/><line x1="880.3" y1="446.5" x2="1181.8" y2="446.5" stroke="#dcdcdc" stroke-width="1"/><line x1="880.3" y1="481.2" x2="1181.8" y2="481.2" stroke="#dcdcdc" stroke-width="1"/><line x1="880.3" y1="515.9" x2="1181.8" y2="515.9" stroke="#dcdcdc" stroke-width="1"/><line x1="880.3" y1="550.6" x2="1181.8" y2="550.6" stroke="#dcdcdc" stroke-width="1"/><line x1="876.3" y1="411.8" x2="880.3" y2="411.8" stroke="#bbb" stroke-width="1"/><text x="873.3" y="415.3" text-anchor="end" font-size="9.6" fill="#fff" stroke="#fff" stroke-width="0.2" font-family="Liberation Sans">150</text><line x1="876.3" y1="446.5" x2="880.3" y2="446.5" stroke="#bbb" stroke-width="1"/><text x="873.3" y="450.0" text-anchor="end" font-size="9.6" fill="#fff" stroke="#fff" stroke-width="0.2" font-family="Liberation Sans">100</text><line x1="876.3" y1="481.2" x2="880.3" y2="481.2" stroke="#bbb" stroke-width="1"/><text x="873.3" y="484.7" text-anchor="end" font-size="9.6" fill="#fff" stroke="#fff" stroke-width="0.2" font-family="Liberation Sans">50</text><line x1="876.3" y1="515.9" x2="880.3" y2="515.9" stroke="#bbb" stroke-width="1"/><text x="873.3" y="519.4" text-anchor="end" font-size="9.6" fill="#fff" stroke="#fff" stroke-width="0.2" font-family="Liberation Sans">0</text><line x1="876.3" y1="550.6" x2="880.3" y2="550.6" stroke="#bbb" stroke-width="1"/><text x="873.3" y="554.1" text-anchor="end" font-size="9.6" fill="#fff" stroke="#fff" stroke-width="0.2" font-family="Liberation Sans">-50</text><line x1="876.3" y1="585.3" x2="880.3" y2="585.3" stroke="#bbb" stroke-width="1"/><text x="873.3" y="588.8" text-anchor="end" font-size="9.6" fill="#fff" stroke="#fff" stroke-width="0.2" font-family="Liberation Sans">-100</text><line x1="880.3" y1="585.3" x2="880.3" y2="589.3" stroke="#bbb" stroke-width="1"/><text x="880.3" y="601.3" text-anchor="middle" font-size="9.6" fill="#fff" stroke="#fff" stroke-width="0.2" font-family="Liberation Sans">11.0</text><line x1="913.8" y1="585.3" x2="913.8" y2="589.3" stroke="#bbb" stroke-width="1"/><text x="913.8" y="601.3" text-anchor="middle" font-size="9.6" fill="#fff" stroke="#fff" stroke-width="0.2" font-family="Liberation Sans">11.5</text><line x1="947.3" y1="585.3" x2="947.3" y2="589.3" stroke="#bbb" stroke-width="1"/><text x="947.3" y="601.3" text-anchor="middle" font-size="9.6" fill="#fff" stroke="#fff" stroke-width="0.2" font-family="Liberation Sans">12.0</text><line x1="980.8" y1="585.3" x2="980.8" y2="589.3" stroke="#bbb" stroke-width="1"/><text x="980.8" y="601.3" text-anchor="middle" font-size="9.6" fill="#fff" stroke="#fff" stroke-width="0.2" font-family="Liberation Sans">12.5</text><line x1="1014.3" y1="585.3" x2="1014.3" y2="589.3" stroke="#bbb" stroke-width="1"/><text x="1014.3" y="601.3" text-anchor="middle" font-size="9.6" fill="#fff" stroke="#fff" stroke-width="0.2" font-family="Liberation Sans">13.0</text><line x1="1047.8" y1="585.3" x2="1047.8" y2="589.3" stroke="#bbb" stroke-width="1"/><text x="1047.8" y="601.3" text-anchor="middle" font-size="9.6" fill="#fff" stroke="#fff" stroke-width="0.2" font-family="Liberation Sans">13.5</text><line x1="1081.3" y1="585.3" x2="1081.3" y2="589.3" stroke="#bbb" stroke-width="1"/><text x="1081.3" y="601.3" text-anchor="middle" font-size="9.6" fill="#fff" stroke="#fff" stroke-width="0.2" font-family="Liberation Sans">14.0</text><line x1="1114.8" y1="585.3" x2="1114.8" y2="589.3" stroke="#bbb" stroke-width="1"/><text x="1114.8" y="601.3" text-anchor="middle" font-size="9.6" fill="#fff" stroke="#fff" stroke-width="0.2" font-family="Liberation Sans">14.5</text><line x1="1148.3" y1="585.3" x2="1148.3" y2="589.3" stroke="#bbb" stroke-width="1"/><text x="1148.3" y="601.3" text-anchor="middle" font-size="9.6" fill="#fff" stroke="#fff" stroke-width="0.2" font-family="Liberation Sans">15.0</text><line x1="1181.8" y1="585.3" x2="1181.8" y2="589.3" stroke="#bbb" stroke-width="1"/><text x="1181.8" y="601.3" text-anchor="middle" font-size="9.6" fill="#fff" stroke="#fff" stroke-width="0.2" font-family="Liberation Sans">15.5</text><text x="1031" y="621.5" text-anchor="middle" font-size="11.3" fill="#fff" font-family="Liberation Sans">Time (seconds)</text><circle cx="940.6" cy="538.0" r="3.6" fill="#47b1c6"/><circle cx="944.6" cy="534.3" r="3.6" fill="#47b1c6"/><circle cx="948.6" cy="530.1" r="3.6" fill="#47b1c6"/><circle cx="952.7" cy="525.6" r="3.6" fill="#47b1c6"/><circle cx="956.7" cy="520.8" r="3.6" fill="#47b1c6"/><circle cx="960.7" cy="515.9" r="3.6" fill="#47b1c6"/><circle cx="964.7" cy="511.0" r="3.6" fill="#47b1c6"/><circle cx="968.7" cy="506.2" r="3.6" fill="#47b1c6"/><circle cx="972.8" cy="501.7" r="3.6" fill="#47b1c6"/><circle cx="976.8" cy="497.5" r="3.6" fill="#47b1c6"/><circle cx="980.8" cy="493.8" r="3.6" fill="#47b1c6"/><circle cx="984.8" cy="490.6" r="3.6" fill="#47b1c6"/><circle cx="988.8" cy="488.1" r="3.6" fill="#47b1c6"/><circle cx="992.9" cy="486.2" r="3.6" fill="#47b1c6"/><circle cx="996.9" cy="485.1" r="3.6" fill="#47b1c6"/><circle cx="1000.9" cy="484.7" r="3.6" fill="#47b1c6"/><circle cx="1004.9" cy="485.1" r="3.6" fill="#47b1c6"/><circle cx="1008.9" cy="486.2" r="3.6" fill="#47b1c6"/><circle cx="1013.0" cy="488.1" r="3.6" fill="#47b1c6"/><circle cx="1017.0" cy="490.6" r="3.6" fill="#47b1c6"/><circle cx="1021.0" cy="493.8" r="3.6" fill="#47b1c6"/><circle cx="1025.0" cy="497.5" r="3.6" fill="#47b1c6"/><circle cx="1029.0" cy="501.7" r="3.6" fill="#47b1c6"/><circle cx="1033.1" cy="506.2" r="3.6" fill="#47b1c6"/><circle cx="1037.1" cy="511.0" r="3.6" fill="#47b1c6"/><circle cx="1041.1" cy="515.9" r="3.6" fill="#47b1c6"/><circle cx="1045.1" cy="520.8" r="3.6" fill="#47b1c6"/><circle cx="1049.1" cy="525.6" r="3.6" fill="#47b1c6"/><circle cx="1053.2" cy="530.1" r="3.6" fill="#47b1c6"/><circle cx="1057.2" cy="534.3" r="3.6" fill="#47b1c6"/><circle cx="1061.2" cy="538.0" r="3.6" fill="#47b1c6"/><circle cx="1065.2" cy="541.2" r="3.6" fill="#47b1c6"/><circle cx="1069.2" cy="543.7" r="3.6" fill="#47b1c6"/><circle cx="1073.3" cy="545.6" r="3.6" fill="#47b1c6"/><circle cx="1077.3" cy="546.7" r="3.6" fill="#47b1c6"/><circle cx="1081.3" cy="547.1" r="3.6" fill="#47b1c6"/><circle cx="1085.3" cy="546.7" r="3.6" fill="#47b1c6"/><circle cx="1089.3" cy="545.6" r="3.6" fill="#47b1c6"/><circle cx="1093.4" cy="543.7" r="3.6" fill="#47b1c6"/><circle cx="1097.4" cy="541.2" r="3.6" fill="#47b1c6"/><circle cx="1101.4" cy="538.0" r="3.6" fill="#47b1c6"/><circle cx="1105.4" cy="534.3" r="3.6" fill="#47b1c6"/><circle cx="1109.4" cy="530.1" r="3.6" fill="#47b1c6"/><circle cx="1113.5" cy="525.6" r="3.6" fill="#47b1c6"/><circle cx="1117.5" cy="520.8" r="3.6" fill="#47b1c6"/><circle cx="1121.5" cy="515.9" r="3.6" fill="#47b1c6"/><circle cx="1125.5" cy="511.0" r="3.6" fill="#47b1c6"/><circle cx="1129.5" cy="506.2" r="3.6" fill="#47b1c6"/><circle cx="1133.6" cy="501.7" r="3.6" fill="#47b1c6"/><circle cx="1137.6" cy="497.5" r="3.6" fill="#47b1c6"/><circle cx="1141.6" cy="493.8" r="3.6" fill="#47b1c6"/><circle cx="940.6" cy="484.7" r="3.6" fill="#e8a025"/><circle cx="944.6" cy="487.9" r="3.6" fill="#e8a025"/><circle cx="948.6" cy="491.2" r="3.6" fill="#e8a025"/><circle cx="952.7" cy="494.3" r="3.6" fill="#e8a025"/><circle cx="956.7" cy="497.4" r="3.6" fill="#e8a025"/><circle cx="960.7" cy="500.3" r="3.6" fill="#e8a025"/><circle cx="964.7" cy="503.0" r="3.6" fill="#e8a025"/><circle cx="968.7" cy="505.6" r="3.6" fill="#e8a025"/><circle cx="972.8" cy="507.9" r="3.6" fill="#e8a025"/><circle cx="976.8" cy="509.9" r="3.6" fill="#e8a025"/><circle cx="980.8" cy="511.7" r="3.6" fill="#e8a025"/><circle cx="984.8" cy="513.2" r="3.6" fill="#e8a025"/><circle cx="988.8" cy="514.4" r="3.6" fill="#e8a025"/><circle cx="992.9" cy="515.2" r="3.6" fill="#e8a025"/><circle cx="996.9" cy="515.7" r="3.6" fill="#e8a025"/><circle cx="1000.9" cy="515.9" r="3.6" fill="#e8a025"/><circle cx="1004.9" cy="515.7" r="3.6" fill="#e8a025"/><circle cx="1008.9" cy="515.2" r="3.6" fill="#e8a025"/><circle cx="1013.0" cy="514.4" r="3.6" fill="#e8a025"/><circle cx="1017.0" cy="513.2" r="3.6" fill="#e8a025"/><circle cx="1021.0" cy="511.7" r="3.6" fill="#e8a025"/><circle cx="1025.0" cy="509.9" r="3.6" fill="#e8a025"/><circle cx="1029.0" cy="507.9" r="3.6" fill="#e8a025"/><circle cx="1033.1" cy="505.6" r="3.6" fill="#e8a025"/><circle cx="1037.1" cy="503.0" r="3.6" fill="#e8a025"/><circle cx="1041.1" cy="500.3" r="3.6" fill="#e8a025"/><circle cx="1045.1" cy="497.4" r="3.6" fill="#e8a025"/><circle cx="1049.1" cy="494.3" r="3.6" fill="#e8a025"/><circle cx="1053.2" cy="491.2" r="3.6" fill="#e8a025"/><circle cx="1057.2" cy="487.9" r="3.6" fill="#e8a025"/><circle cx="1061.2" cy="484.7" r="3.6" fill="#e8a025"/><circle cx="1065.2" cy="481.4" r="3.6" fill="#e8a025"/><circle cx="1069.2" cy="478.2" r="3.6" fill="#e8a025"/><circle cx="1073.3" cy="475.0" r="3.6" fill="#e8a025"/><circle cx="1077.3" cy="472.0" r="3.6" fill="#e8a025"/><circle cx="1081.3" cy="469.1" r="3.6" fill="#e8a025"/><circle cx="1085.3" cy="466.3" r="3.6" fill="#e8a025"/><circle cx="1089.3" cy="463.8" r="3.6" fill="#e8a025"/><circle cx="1093.4" cy="461.5" r="3.6" fill="#e8a025"/><circle cx="1097.4" cy="459.4" r="3.6" fill="#e8a025"/><circle cx="1101.4" cy="457.6" r="3.6" fill="#e8a025"/><circle cx="1105.4" cy="456.1" r="3.6" fill="#e8a025"/><circle cx="1109.4" cy="455.0" r="3.6" fill="#e8a025"/><circle cx="1113.5" cy="454.1" r="3.6" fill="#e8a025"/><circle cx="1117.5" cy="453.6" r="3.6" fill="#e8a025"/><circle cx="1121.5" cy="453.4" r="3.6" fill="#e8a025"/><circle cx="1125.5" cy="453.6" r="3.6" fill="#e8a025"/><circle cx="1129.5" cy="454.1" r="3.6" fill="#e8a025"/><circle cx="1133.6" cy="455.0" r="3.6" fill="#e8a025"/><circle cx="1137.6" cy="456.1" r="3.6" fill="#e8a025"/><circle cx="1141.6" cy="457.6" r="3.6" fill="#e8a025"/></svg>
</body></html>
